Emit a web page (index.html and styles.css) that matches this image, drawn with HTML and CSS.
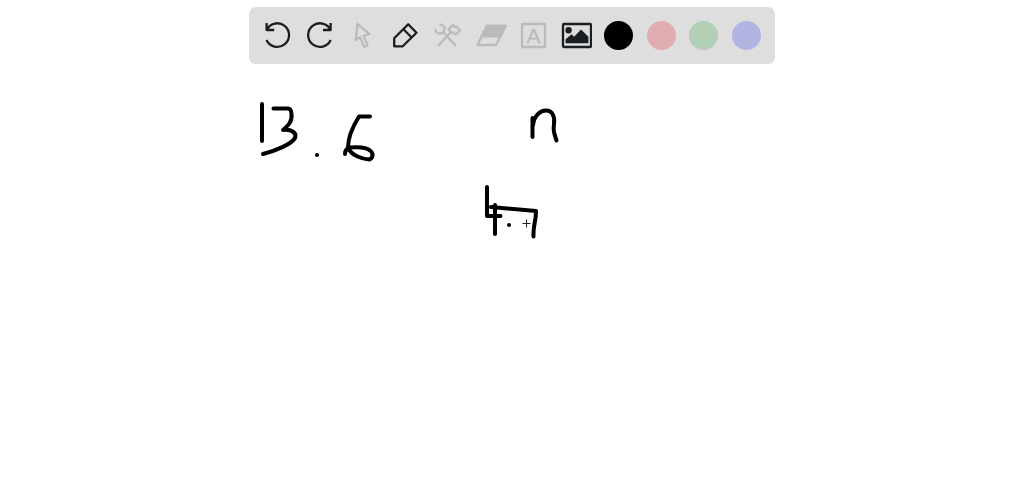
FILE: index.html
```html
<!DOCTYPE html>
<html lang="en">
<head>
    <meta charset="UTF-8">
    <meta name="viewport" content="width=device-width, initial-scale=1.0">
    <title>Whiteboard</title>
    <link rel="stylesheet" href="styles.css">
</head>
<body>
    <div class="toolbar" role="toolbar" aria-label="Drawing tools">
        <button class="tool" type="button" aria-label="Undo">
            <svg class="icon" viewBox="0 0 33 33"><path d="M5.6 4v7h7.6M5.6 11A11.8 11.8 0 1 1 5.5 21"/></svg>
        </button>
        <button class="tool" type="button" aria-label="Redo">
            <svg class="icon" viewBox="0 0 33 33"><path d="M27.6 4v7H20M27.6 11A11.8 11.8 0 1 0 27.7 21"/></svg>
        </button>
        <button class="tool muted" type="button" aria-label="Select">
            <svg class="icon" viewBox="0 0 33 33"><path d="M11.4 4.8 9.8 21l4.5-2.8 3.5 9.8 3.8-1.6-3.8-9.600 5.600-1.800z"/></svg>
        </button>
        <button class="tool" type="button" aria-label="Pen">
            <svg class="icon" viewBox="0 0 33 33"><path d="M19.2 5.3l8.3 8.500-13.800 13.500H5.200v-8z M14.500 10.300l8.400 8.400"/></svg>
        </button>
        <button class="tool muted" type="button" aria-label="Tools">
            <svg class="icon" viewBox="0 0 33 33">
                <path d="M4.500 10c0 3 2 4.500 4 4.500 3 0 5-2 5-4.500 0-2.500-2-4.500-5-4.500M12 13l13 14M7 27l12.500-13.500"/>
                <path d="M17.500 10.500 22 6l2 2 1.500-.5 3.500 4-4.500 4-2-2-1.500.5z"/>
            </svg>
        </button>
        <button class="tool muted" type="button" aria-label="Eraser">
            <svg class="icon" viewBox="0 0 33 33">
                <path d="M12.800 7H31.500L22 26H3.500z"/>
                <path class="solid" d="M12.800 7H31.500L26.500 17.300H7.700z"/>
            </svg>
        </button>
        <button class="tool muted" type="button" aria-label="Text">
            <svg class="icon" viewBox="0 0 33 33">
                <rect x="5" y="5" width="23" height="23"/>
                <text class="letter" x="16.500" y="24">A</text>
            </svg>
        </button>
        <button class="tool" type="button" aria-label="Image">
            <svg class="icon" viewBox="0 0 33 33">
                <rect x="4" y="5" width="28" height="23" rx="1"/>
                <circle class="solid dot" cx="9.600" cy="11.200" r="3.200"/>
                <path class="solid dot" d="M6.600 24.200v-4l6-5 2.500 2.500 7-7.200 7.300 7.200v6.500z"/>
            </svg>
        </button>
        <button class="tool" type="button" aria-label="Black"><span class="swatch black"></span></button>
        <button class="tool" type="button" aria-label="Red"><span class="swatch red"></span></button>
        <button class="tool" type="button" aria-label="Green"><span class="swatch green"></span></button>
        <button class="tool" type="button" aria-label="Blue"><span class="swatch blue"></span></button>
    </div>

    <main class="board">
        <svg class="drawing" viewBox="0 64 1024 432" role="img" aria-label="Handwritten 13.6, n and 4.7">
            <!-- 13.6 -->
            <path d="M262 104v37"/>
            <path d="M273.500 108.500h14.500q3 0 3.500 5c1 8-3 12-8.500 16.500 9-1 14 3 12 8-3 6-20 13-32 16"/>
            <circle class="point" cx="317" cy="155" r="2"/>
            <path d="M370 116.500h-11c-5 8-11 20-11 31 3 8 14 11.500 21 12 4-1 5-6 1-9-4-4-14-3.500-20-3-4 1-5 3-5 6.500"/>
            <!-- n -->
            <path d="M532.500 118v19M533 125c1-9 7-14.500 13-14.500 7 0 9 7 8 13.500-1 6 0 9 2.500 16.500"/>
            <!-- 4.7 -->
            <path d="M487 187v29h13.500M495 205v29"/>
            <circle class="point" cx="509" cy="225" r="2"/>
            <path d="M491 207l45 4c0 12-3 13-2.500 25.500"/>
            <path class="cursor" d="M522.500 223.500h8M526.500 219.500v8"/>
        </svg>
    </main>
</body>
</html>
```
FILE: styles.css
```css
body {
    margin: 0;
    background-color: #fff;
    font-family: "Liberation Sans", Arial, sans-serif;
}

/* Toolbar */
.toolbar {
    display: grid;
    grid-template-columns: repeat(12, 1fr);
    box-sizing: border-box;
    max-width: 526px;
    margin: 7px auto 0;
    padding: 12px 7px;
    background-color: #dedede;
    border-radius: 7px;
}

.tool {
    display: flex;
    align-items: center;
    justify-content: center;
    height: 33px;
    padding: 0;
    border: none;
    background: none;
    color: #1b1e21;
    cursor: pointer;
}

.muted {
    color: #bbb;
}

.icon {
    flex: none;
    width: 33px;
    height: 33px;
    fill: none;
    stroke: currentColor;
    stroke-width: 2.3;
    stroke-linejoin: round;
}

.solid {
    fill: currentColor;
}

.dot {
    stroke: none;
}

.letter {
    fill: currentColor;
    stroke: currentColor;
    stroke-width: 0.3;
    font-family: "Liberation Sans", Arial, sans-serif;
    font-size: 21px;
    text-anchor: middle;
}

.swatch {
    flex: none;
    width: 29px;
    height: 29px;
    border-radius: 50%;
}

.black {
    background-color: #000;
}

.red {
    background-color: #dfacb0;
}

.green {
    background-color: #b3cfb5;
}

.blue {
    background-color: #b2b5e1;
}

/* Board */
.drawing {
    display: block;
    width: 100%;
    fill: none;
    stroke: #000;
    stroke-width: 4;
    stroke-linecap: round;
    stroke-linejoin: round;
}

.point {
    fill: #000;
    stroke: none;
}

.cursor {
    stroke: #222;
    stroke-width: 1;
    stroke-linecap: butt;
}
```
